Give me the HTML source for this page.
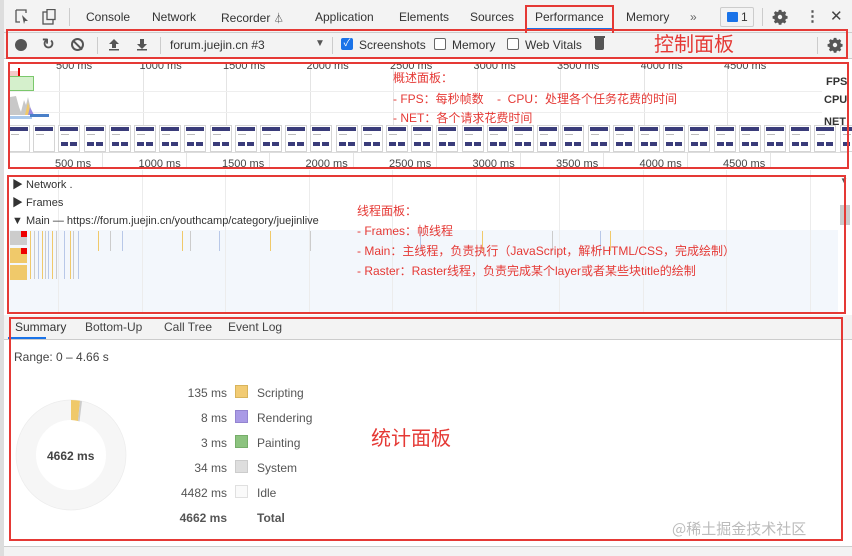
<!DOCTYPE html>
<html><head><meta charset="utf-8"><style>
*{margin:0;padding:0;box-sizing:border-box}
body{width:852px;height:556px;overflow:hidden;background:#fff;font-family:"Liberation Sans","Noto Sans CJK SC",sans-serif;font-size:12px;color:#333;position:relative}
.a{position:absolute}
.red{position:absolute;border:2px solid #e53935}
.cn{position:absolute;color:#e53935;font-family:"Liberation Sans","Noto Sans CJK SC",sans-serif;white-space:nowrap}
.tab{position:absolute;top:10px;font-size:12px;color:#333}
.thumb{position:absolute;top:125px;width:22px;height:27px;border:1px solid #d4d4d4;background:#fff}
.thumb i{position:absolute;left:1px;top:1px;width:18px;height:4px;background:#3a3c7a}
.thumb s{position:absolute;left:2px;top:8px;width:8px;height:1px;background:#bbb}
.thumb b{position:absolute;left:2px;top:16px;width:7px;height:4px;background:#3a3c7a}
.thumb u{position:absolute;left:11px;top:16px;width:7px;height:4px;background:#3a3c7a}
.vl{position:absolute;width:1px;background:#e4e4e4}
.lg{position:absolute;font-size:12px;color:#555}
.sw{position:absolute;left:235px;width:13px;height:13px;border:1px solid}
</style></head><body>
<div class="a" style="left:0;top:0;width:852px;height:33px;background:#f3f3f3;border-bottom:1px solid #ccc"></div>
<div class="a" style="left:0;top:0;width:4px;height:556px;background:#ddd"></div>
<svg class="a" style="left:15px;top:9px" width="44" height="16"><path d="M1 1h10v3M1 1v12h4" stroke="#555" fill="none" stroke-width="1.3"/><path d="M7 6l6 6-3 0 -1 3z" fill="#555"/><rect x="28" y="3" width="10" height="12" stroke="#555" fill="none" stroke-width="1.3"/><rect x="32" y="0.5" width="8" height="10" stroke="#555" fill="#f3f3f3" stroke-width="1.3"/></svg>
<div class="a" style="left:69px;top:8px;width:1px;height:18px;background:#ccc"></div>
<div class="tab" style="left:86px">Console</div>
<div class="tab" style="left:152px">Network</div>
<div class="tab" style="left:221px">Recorder <span style="font-size:10px">⏃</span></div>
<div class="tab" style="left:315px">Application</div>
<div class="tab" style="left:399px">Elements</div>
<div class="tab" style="left:470px">Sources</div>
<div class="tab" style="left:535px">Performance</div>
<div class="a" style="left:527px;top:28px;width:85px;height:2px;background:#1a73e8"></div>
<div class="tab" style="left:626px">Memory</div>
<div class="tab" style="left:690px;color:#666">»</div>
<div class="a" style="left:720px;top:7px;width:34px;height:20px;border:1px solid #ccc;border-radius:2px"></div>
<div class="a" style="left:727px;top:12px;width:11px;height:10px;background:#1a73e8;border-radius:1px"></div>
<div class="tab" style="left:741px;color:#333">1</div>
<div class="a" style="left:762px;top:8px;width:1px;height:18px;background:#ccc"></div>
<svg class="a" style="left:772px;top:9px" width="16" height="16" viewBox="0 0 16 16"><path d="M8 1l1.5 0 .4 2 1.6.7 1.7-1.2 2.1 2.1-1.2 1.7.7 1.6 2 .4v3l-2 .4-.7 1.6 1.2 1.7-2.1 2.1-1.7-1.2-1.6.7-.4 2h-3l-.4-2-1.6-.7-1.7 1.2-2.1-2.1 1.2-1.7-.7-1.6-2-.4v-3l2-.4.7-1.6-1.2-1.7 2.1-2.1 1.7 1.2 1.6-.7.4-2z" transform="scale(.85) translate(1.5 0)" fill="#555"/><circle cx="8" cy="8" r="2.2" fill="#f3f3f3"/></svg>
<div class="tab" style="left:805px;top:7px;font-size:15px;color:#555;font-weight:bold">⋮</div>
<div class="tab" style="left:830px;top:7px;font-size:15px;color:#444">✕</div>
<div class="red" style="left:525px;top:5px;width:89px;height:32px"></div>
<div class="a" style="left:4px;top:33px;width:848px;height:26px;background:#f3f3f3;border-bottom:1px solid #ccc"></div>
<div class="a" style="left:15px;top:39px;width:12px;height:12px;border-radius:50%;background:#555"></div>
<div class="a" style="left:42px;top:35px;font-size:15px;color:#555;font-weight:bold">↻</div>
<div class="a" style="left:71px;top:38px;width:13px;height:13px;border:2px solid #555;border-radius:50%"></div>
<div class="a" style="left:71px;top:44px;width:13px;height:2px;background:#555;transform:rotate(45deg)"></div>
<div class="a" style="left:97px;top:37px;width:1px;height:17px;background:#ccc"></div>
<svg class="a" style="left:107px;top:37px" width="46" height="15"><path d="M2 7l5-5 5 5h-3v4h-4v-4z" fill="#555"/><rect x="2" y="12" width="10" height="1.5" fill="#555"/><path d="M30 7l5 5 5-5h-3v-5h-4v5z" fill="#555"/><rect x="30" y="12" width="10" height="1.5" fill="#555"/></svg>
<div class="a" style="left:160px;top:37px;width:1px;height:17px;background:#ccc"></div>
<div class="a" style="left:170px;top:38px;font-size:12px;color:#333">forum.juejin.cn #3</div>
<div class="a" style="left:315px;top:38px;font-size:10px;color:#555">▼</div>
<div class="a" style="left:332px;top:37px;width:1px;height:17px;background:#ccc"></div>
<div class="a" style="left:341px;top:38px;width:12px;height:12px;background:#1a73e8;border-radius:2px;color:#fff;font-size:10px;line-height:12px;text-align:center">✓</div>
<div class="a" style="left:359px;top:38px;font-size:12px">Screenshots</div>
<div class="a" style="left:434px;top:38px;width:12px;height:12px;border:1px solid #666;border-radius:2px;background:#fff"></div>
<div class="a" style="left:452px;top:38px;font-size:12px">Memory</div>
<div class="a" style="left:507px;top:38px;width:12px;height:12px;border:1px solid #666;border-radius:2px;background:#fff"></div>
<div class="a" style="left:525px;top:38px;font-size:12px">Web Vitals</div>
<div class="a" style="left:595px;top:38px;width:9px;height:12px;background:#555;border-radius:0 0 2px 2px"></div>
<div class="a" style="left:594px;top:36px;width:11px;height:2px;background:#555"></div>
<div class="a" style="left:817px;top:37px;width:1px;height:17px;background:#ccc"></div>
<svg class="a" style="left:827px;top:37px" width="16" height="16" viewBox="0 0 16 16"><path d="M8 1l1.5 0 .4 2 1.6.7 1.7-1.2 2.1 2.1-1.2 1.7.7 1.6 2 .4v3l-2 .4-.7 1.6 1.2 1.7-2.1 2.1-1.7-1.2-1.6.7-.4 2h-3l-.4-2-1.6-.7-1.7 1.2-2.1-2.1 1.2-1.7-.7-1.6-2-.4v-3l2-.4.7-1.6-1.2-1.7 2.1-2.1 1.7 1.2 1.6-.7.4-2z" transform="scale(.85) translate(1.5 0)" fill="#555"/><circle cx="8" cy="8" r="2.2" fill="#f3f3f3"/></svg>
<div class="cn" style="left:654px;top:32px;font-size:20px;line-height:26px">控制面板</div>
<div class="red" style="left:6px;top:29px;width:842px;height:30px"></div>
<div class="a" style="left:8px;top:63px;width:840px;height:105px;background:#fff"></div>
<div id="ov"></div>
<div class="a" style="left:10px;top:71px;width:10px;height:6px;background:#f5c8c8"></div>
<div class="a" style="left:18px;top:68px;width:2px;height:8px;background:#d00"></div>
<div class="a" style="left:8px;top:76px;width:26px;height:15px;background:#d5f0cc;border:1px solid #7bc86c;border-left:none"></div>
<svg class="a" style="left:8px;top:92px" width="30" height="23"><path d="M0 23 L2 5 L8 4 L11 15 L13 20 L16 8 L18 13 L20 5 L23 18 L25 23z" fill="#c8c8c8"/><path d="M17 23 L20 10 L23 23z" fill="#f0c96a"/><path d="M20 23 L22 15 L26 23z" fill="#9b8ce0"/></svg>
<div class="a" style="left:8px;top:116px;width:24px;height:3px;background:#a9c8ec"></div>
<div class="a" style="left:30px;top:114px;width:19px;height:3px;background:#4a80c8"></div>
<div class="a" style="left:826px;top:76px;font-size:11px;color:#333;font-weight:bold">FPS</div>
<div class="a" style="left:824px;top:94px;font-size:11px;color:#333;font-weight:bold">CPU</div>
<div class="a" style="left:824px;top:116px;font-size:11px;color:#333;font-weight:bold">NET</div>
<div class="a" style="left:8px;top:152px;width:840px;height:1px;background:#ddd"></div>
<div class="cn" style="left:393px;top:70px;font-size:12px;line-height:16px">概述面板：</div>
<div class="cn" style="left:393px;top:90px;font-size:12px">- FPS：每秒帧数&nbsp;&nbsp;&nbsp;&nbsp;-&nbsp; CPU：处理各个任务花费的时间</div>
<div class="cn" style="left:393px;top:109px;font-size:12px">- NET：各个请求花费时间</div>
<div class="red" style="left:8px;top:62px;width:841px;height:107px"></div>
<div class="a" style="left:8px;top:170px;width:840px;height:142px;background:#fff"></div>
<div class="a" style="left:8px;top:230px;width:830px;height:82px;background:#f3f7fc"></div>
<div id="th"></div>
<div class="a" style="left:12px;top:176px;font-size:11px">▶ Network .</div>
<div class="a" style="left:12px;top:194px;font-size:11px">▶ Frames</div>
<div class="a" style="left:12px;top:215px;font-size:11px">▼ Main — https://forum.juejin.cn/youthcamp/category/juejinlive</div>
<div class="a" style="left:10px;top:231px;width:17px;height:14px;background:#ccc"></div>
<div class="a" style="left:10px;top:248px;width:17px;height:15px;background:#f0c96a"></div>
<div class="a" style="left:10px;top:265px;width:17px;height:15px;background:#f0c96a"></div>
<div class="a" style="left:21px;top:231px;width:6px;height:6px;background:#e00"></div>
<div class="a" style="left:21px;top:248px;width:6px;height:6px;background:#e00"></div>
<div class="a" style="left:840px;top:205px;width:10px;height:20px;background:#ccc"></div>
<div class="a" style="left:840px;top:176px;font-size:8px;color:#555">▼</div>
<div class="cn" style="left:357px;top:202px;font-size:12px">线程面板：</div>
<div class="cn" style="left:357px;top:222px;font-size:12px">- Frames：帧线程</div>
<div class="cn" style="left:357px;top:242px;font-size:12px">- Main：主线程，负责执行（JavaScript，解析HTML/CSS，完成绘制）</div>
<div class="cn" style="left:357px;top:262px;font-size:12px">- Raster：Raster线程，负责完成某个layer或者某些块title的绘制</div>
<div class="red" style="left:7px;top:175px;width:839px;height:139px"></div>
<div class="a" style="left:4px;top:315px;width:848px;height:25px;background:#f3f3f3;border-bottom:1px solid #ccc"></div>
<div class="a" style="left:15px;top:320px;font-size:12px">Summary</div>
<div class="a" style="left:8px;top:337px;width:38px;height:2px;background:#1a73e8"></div>
<div class="a" style="left:85px;top:320px;font-size:12px;color:#444">Bottom-Up</div>
<div class="a" style="left:164px;top:320px;font-size:12px;color:#444">Call Tree</div>
<div class="a" style="left:228px;top:320px;font-size:12px;color:#444">Event Log</div>
<div class="a" style="left:14px;top:350px;font-size:12px;color:#444">Range: 0 – 4.66 s</div>
<svg class="a" style="left:15px;top:399px" width="112" height="112"><circle cx="56" cy="56" r="45" fill="none" stroke="#f6f6f6" stroke-width="20"/><circle cx="56" cy="56" r="55" fill="none" stroke="#ececec" stroke-width="0.7"/><path d="M56 1 A55 55 0 0 1 65 1.8 L63 22 A35 35 0 0 0 56 21z" fill="#f0c96a"/><path d="M65 1.8 A55 55 0 0 1 67 2.2 L64.5 22.5 L63 22z" fill="#ccc"/></svg>
<div class="a" style="left:47px;top:449px;font-size:12px;font-weight:bold;color:#444">4662 ms</div>
<div class="lg" style="left:150px;top:386px;width:77px;text-align:right">135 ms</div>
<div class="lg" style="left:150px;top:411px;width:77px;text-align:right">8 ms</div>
<div class="lg" style="left:150px;top:436px;width:77px;text-align:right">3 ms</div>
<div class="lg" style="left:150px;top:461px;width:77px;text-align:right">34 ms</div>
<div class="lg" style="left:150px;top:486px;width:77px;text-align:right">4482 ms</div>
<div class="lg" style="left:150px;top:511px;width:77px;text-align:right;font-weight:bold">4662 ms</div>
<div class="sw" style="top:385px;background:#f2cb73;border-color:#d8b45c"></div>
<div class="sw" style="top:410px;background:#a99ae6;border-color:#9384d0"></div>
<div class="sw" style="top:435px;background:#8cc37f;border-color:#76ad6a"></div>
<div class="sw" style="top:460px;background:#dedede;border-color:#ccc"></div>
<div class="sw" style="top:485px;background:#fafafa;border-color:#e0e0e0"></div>
<div class="lg" style="left:257px;top:386px">Scripting</div>
<div class="lg" style="left:257px;top:411px">Rendering</div>
<div class="lg" style="left:257px;top:436px">Painting</div>
<div class="lg" style="left:257px;top:461px">System</div>
<div class="lg" style="left:257px;top:486px">Idle</div>
<div class="lg" style="left:257px;top:511px;font-weight:bold">Total</div>
<div class="cn" style="left:371px;top:422px;font-size:20px">统计面板</div>
<div class="red" style="left:9px;top:317px;width:834px;height:224px"></div>
<div class="a" style="left:4px;top:546px;width:848px;height:10px;background:#f3f3f3;border-top:1px solid #ccc"></div>
<div class="a" style="left:672px;top:518px;font-size:15px;color:#bbb;font-family:'Noto Sans CJK SC',sans-serif">@稀土掘金技术社区</div>
<script>
var ov=document.getElementById('ov'),h='';
var labs=['500 ms','1000 ms','1500 ms','2000 ms','2500 ms','3000 ms','3500 ms','4000 ms','4500 ms'];
for(var i=0;i<9;i++){var x=59+i*83.5;
h+='<div class="vl" style="left:'+x+'px;top:63px;height:89px"></div>';
h+='<div class="a" style="left:'+(x-3)+'px;top:63px;font-size:11px;color:#444;line-height:6px;height:6px;overflow:hidden">'+labs[i]+'</div>';
h+='<div class="a" style="left:'+(x-4)+'px;top:158px;font-size:11px;color:#444">'+labs[i]+'</div>';
h+='<div class="vl" style="left:'+(x+43)+'px;top:152px;height:16px"></div>';}
h+='<div class="a" style="left:8px;top:91px;width:814px;height:1px;background:#eee"></div>';
h+='<div class="a" style="left:8px;top:112px;width:814px;height:1px;background:#eee"></div>';
for(var j=0;j<34;j++){var x=8+j*25.2;
h+='<div class="thumb" style="left:'+x+'px">'+(j<2?'<i></i><s></s>':'<i></i><s></s><b></b><u></u>')+'</div>';}
ov.innerHTML=h;
var th=document.getElementById('th'),g='';
for(var i=0;i<10;i++){g+='<div class="vl" style="left:'+(58+i*83.5)+'px;top:170px;height:142px;background:#ececec"></div>';}
var xs=[30,34,38,42,45,48,52,56,64,70,73,78,98,110,122,182,190,219,270,310,420,482,552,600,610];
for(var k=0;k<xs.length;k++){var c=k%3==0?'#f0c96a':(k%3==1?'#ccc':'#b8c8e8');
g+='<div class="a" style="left:'+xs[k]+'px;top:231px;width:1px;height:'+(k<12?48:20)+'px;background:'+c+'"></div>';}
th.innerHTML=g;
</script>
</body></html>
